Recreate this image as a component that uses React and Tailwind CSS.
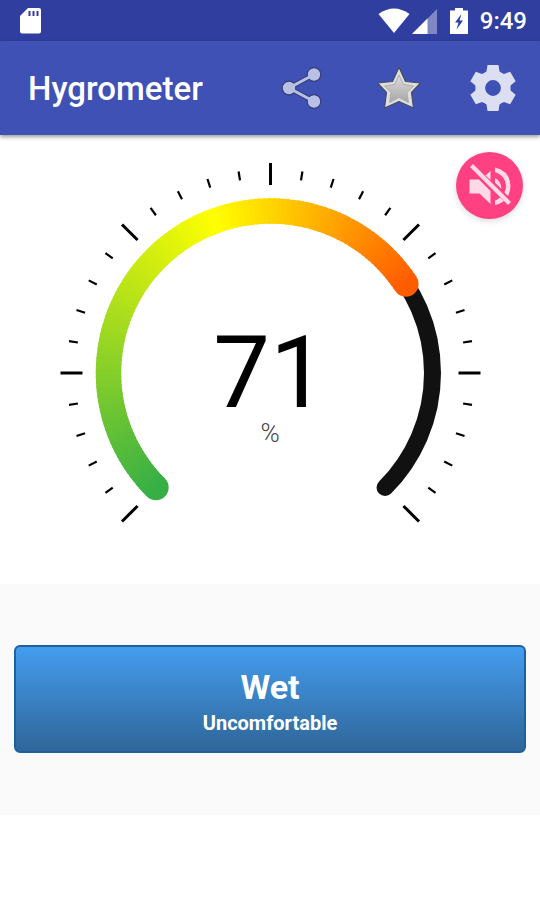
import React, { useState } from 'react';

const CENTER = 216;
const RADIUS = 162;
const START = -135;
const SWEEP = 270;

// Degrees are measured clockwise from the top of the dial
const polar = (deg, r) => {
  const rad = (deg * Math.PI) / 180;
  return [CENTER + r * Math.sin(rad), CENTER - r * Math.cos(rad)];
};

const arc = (from, to) => {
  const [x1, y1] = polar(from, RADIUS);
  const [x2, y2] = polar(to, RADIUS);
  const large = to - from > 180 ? 1 : 0;
  return `M${x1} ${y1}A${RADIUS} ${RADIUS} 0 ${large} 1 ${x2} ${y2}`;
};

const GREEN = [46, 172, 72];
const YELLOW = [255, 255, 0];
const RED = [255, 0, 0];

// The colour sweep begins a little before the arc: green, yellow, red, 120 degrees apart
const sweepColor = (deg) => {
  const t = Math.max(0, (deg + 140) / 120);
  const [a, b] = t < 1 ? [GREEN, YELLOW] : [YELLOW, RED];
  const k = t < 1 ? t : t - 1;
  const c = a.map((v, i) => Math.round(v + (b[i] - v) * k));
  return `rgb(${c.join(',')})`;
};

const Gauge = ({ value }) => {
  const end = START + (SWEEP * value) / 100;
  const ticks = Array.from({ length: 31 }, (_, i) => i);
  const count = 120;
  const step = (end - START) / count;
  const segments = Array.from({ length: count }, (_, i) => START + i * step);
  const [sx, sy] = polar(START, RADIUS);
  const [ex, ey] = polar(end, RADIUS);

  return (
    <div className="grid place-items-center">
      <svg viewBox="-0.5 0 432 427" className="col-start-1 row-start-1 w-4/5" aria-hidden="true">
        {ticks.map((i) => {
          const major = i % 5 === 0;
          const deg = START + i * 9;
          const [x1, y1] = polar(deg, major ? 188 : 195);
          const [x2, y2] = polar(deg, major ? 210 : 204);
          return (
            <line key={i} x1={x1} y1={y1} x2={x2} y2={y2} stroke="#000" strokeWidth={major ? 3 : 2.2} />
          );
        })}
        <path d={arc(START, START + SWEEP)} fill="none" stroke="#111" strokeWidth="17" strokeLinecap="round" />
        <circle cx={sx} cy={sy} r="12.700" fill={sweepColor(START)} />
        <circle cx={ex} cy={ey} r="12.700" fill={sweepColor(end)} />
        {segments.map((deg, i) => (
          <path
            key={i}
            d={arc(deg, Math.min(deg + step * 1.5, end))}
            fill="none"
            stroke={sweepColor(deg + step / 2)}
            strokeWidth="25.400"
          />
        ))}
      </svg>
      <div className="col-start-1 row-start-1 flex flex-col items-center pt-9">
        <span className="text-[101px] leading-[88px] text-black">{value}</span>
        <span className="text-[26px] leading-8 font-light text-[#444]">%</span>
      </div>
    </div>
  );
};

const StatusBar = () => (
  <div className="flex h-[41px] items-center justify-between bg-[#303f9f] pr-[13px] pl-5 text-white">
    <svg width="22" height="26" viewBox="0 0 22 26" aria-hidden="true">
      <path d="M8 0H19Q21 0 21 2V23.500Q21 25.500 19 25.500H2Q0 25.500 0 23.500V8Z" fill="#fff" />
      <path d="M9.500 3V8M13.500 3V8M17.500 3V8" stroke="#303f9f" strokeWidth="2" />
    </svg>
    <div className="flex items-center">
      <svg width="32" height="26" viewBox="0 0 32 26" aria-hidden="true">
        <path d="M0.500 6Q16 -5 31.500 6L16 25Z" fill="#fff" />
      </svg>
      <svg width="26" height="26" viewBox="0 0 26 26" className="ml-0.5" aria-hidden="true">
        <path d="M25 1V26H0Z" fill="#7f88c4" />
        <path d="M15.500 10.500V26H0Z" fill="#fff" />
      </svg>
      <svg width="18" height="26" viewBox="0 0 18 26" className="ml-3" aria-hidden="true">
        <path d="M5 0H13V2.500H18V26H0V2.500H5Z" fill="#fff" />
        <path d="M11.500 6L5 14.500H8.500L6.500 21.500L13 12.500H9.500Z" fill="#303f9f" />
      </svg>
      <span className="ml-3 text-2xl leading-7 font-medium">9:49</span>
    </div>
  </div>
);

const ShareIcon = () => (
  <svg width="42" height="44" viewBox="0 0 42 44" aria-hidden="true">
    <path d="M33 8.500L8 22L33 35.500" fill="none" stroke="#353f78" strokeWidth="5" />
    <g fill="#b9c0e6" stroke="#353f78" strokeWidth="1.200">
      <circle cx="33" cy="8.500" r="6.800" />
      <circle cx="8" cy="22" r="6.800" />
      <circle cx="33" cy="35.500" r="6.800" />
    </g>
    <path d="M33 8.500L8 22L33 35.500" fill="none" stroke="#b9c0e6" strokeWidth="3" />
  </svg>
);

const StarIcon = () => (
  <svg width="48" height="44" viewBox="0 0 48 44" aria-hidden="true">
    <defs>
      <linearGradient id="star" x1="0" y1="0" x2="0" y2="1">
        <stop offset="0" stopColor="#dcdcdc" />
        <stop offset="1" stopColor="#a6a6a6" />
      </linearGradient>
    </defs>
    <path
      d="M24 1.200L30.500 15.500L45.500 17L36.500 26.500L38.500 42L24 35.500L9.500 42L11.500 26.500L2.500 17L17.500 15.500Z"
      fill="#dedede"
      stroke="#484b62"
      strokeWidth="1.200"
      strokeLinejoin="round"
    />
    <path
      d="M24 9L28.500 18.500L38.500 20L32 26.500L33.500 36.500L24 31.500L14.500 36.500L16 26.500L9.500 20L19.500 18.500Z"
      fill="url(#star)"
      stroke="#adadad"
      strokeWidth="1"
    />
  </svg>
);

const GearIcon = () => (
  <svg width="48" height="48" viewBox="0 0 48 48" aria-hidden="true">
    <circle cx="24" cy="24" r="12.700" fill="none" stroke="#dcdff2" strokeWidth="9.600" />
    {[0, 60, 120, 180, 240, 300].map((deg) => (
      <path
        key={deg}
        d="M18.500 1H29.500L30.500 7.500L33.500 10L28 15H20L14.500 10L17.500 7.500Z"
        fill="#dcdff2"
        transform={`rotate(${deg} 24 24)`}
      />
    ))}
  </svg>
);

const Toolbar = () => (
  <header className="relative z-10 flex h-[94px] items-center justify-between bg-[#3f51b5] pr-[23px] pl-7 shadow-[0_2px_4px_rgba(0,0,0,0.4)]">
    <h1 className="pt-0.5 text-[33px] leading-10 font-medium text-white">Hygrometer</h1>
    <div className="flex items-center">
      <button aria-label="Share" className="mr-[52px]">
        <ShareIcon />
      </button>
      <button aria-label="Rate" className="mr-[46px]">
        <StarIcon />
      </button>
      <button aria-label="Settings">
        <GearIcon />
      </button>
    </div>
  </header>
);

const MuteButton = ({ muted, onClick }) => (
  <button
    aria-label="Sound"
    aria-pressed={muted}
    onClick={onClick}
    className="absolute top-[17px] right-[17px] grid size-[67px] place-items-center rounded-full bg-[#ff4081] shadow-[0_2px_6px_rgba(0,0,0,0.15)]"
  >
    <svg width="44" height="44" viewBox="0 0 44 44" fill="#ffd9e6" aria-hidden="true">
      <path d="M1.500 15.500H11L22.500 27V40L11.500 29.500H1.500Z" />
      <path d="M22.500 7V16L17.500 11.500Z" />
      <path d="M27 14Q33 17 33.500 25L27 18.500Z" />
      <path d="M27 3.500Q42 7 42.500 22Q42.500 27 40 32L36.500 28.500Q38 25.500 38 22Q37.500 11.500 27 8Z" />
      <path d="M27 36.500Q30 35.500 32 33.500L36 37Q32 40 27 41Z" />
      <path d="M2 3L5 0L43 38L40 41Z" />
    </svg>
  </button>
);

const App = () => {
  const [muted, setMuted] = useState(true);

  return (
    <div className="min-h-screen bg-white font-[Roboto,sans-serif]">
      <StatusBar />
      <Toolbar />
      <main>
        <section className="relative pt-[22px]">
          <Gauge value={71} />
          <MuteButton muted={muted} onClick={() => setMuted(!muted)} />
        </section>
        <section className="bg-[#fafafa] px-3.5 pt-[61px] pb-[62px]">
          <div className="flex flex-col items-center rounded-md border-2 border-[#1c62a0] bg-linear-to-b from-[#449def] to-[#2f6699] pt-5 pb-3.5 font-bold text-white">
            <p className="text-[34px] leading-10">Wet</p>
            <p className="mt-0.5 text-xl leading-7">Uncomfortable</p>
          </div>
        </section>
      </main>
    </div>
  );
};

export default App;
